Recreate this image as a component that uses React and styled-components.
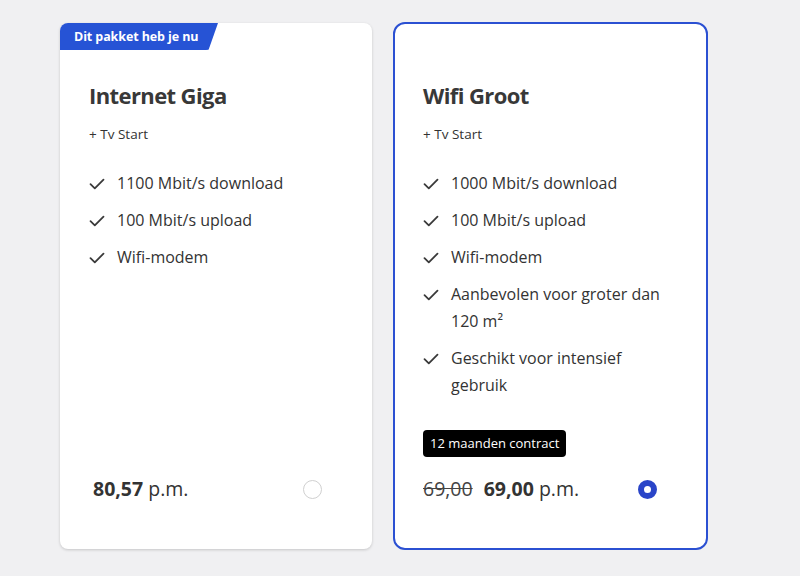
import React from 'react';
import styled, { createGlobalStyle } from 'styled-components';

const GlobalStyle = createGlobalStyle`
    html, body {
        margin: 0;
        padding: 0;
        background: #f0f0f2;
        font-family: "Open Sans", "Liberation Sans", sans-serif;
        color: #333;
    }
`;

const plans = [
    {
        name: 'Internet Giga',
        extra: '+ Tv Start',
        features: ['1100 Mbit/s download', '100 Mbit/s upload', 'Wifi-modem'],
        price: '80,57',
        current: true,
    },
    {
        name: 'Wifi Groot',
        extra: '+ Tv Start',
        features: [
            '1000 Mbit/s download',
            '100 Mbit/s upload',
            'Wifi-modem',
            'Aanbevolen voor groter dan 120 m²',
            'Geschikt voor intensief gebruik',
        ],
        oldPrice: '69,00',
        price: '69,00',
        contract: '12 maanden contract',
        selected: true,
    },
];

const Check = () => (
    <svg width="16" height="12" viewBox="0 0 16 12" fill="none">
        <path d="M1.5 6.2 L5.8 10.4 L14.5 1.6" stroke="#3a3a3a" strokeWidth="1.8" strokeLinecap="round" strokeLinejoin="round" />
    </svg>
);

const App = () => {
    return (
        <>
            <GlobalStyle />
            <Page>
                {plans.map((plan) => (
                    <Card key={plan.name} selected={plan.selected}>
                        {plan.current && <CurrentBadge>Dit pakket heb je nu</CurrentBadge>}
                        <Title>{plan.name}</Title>
                        <Extra>{plan.extra}</Extra>
                        <Features>
                            {plan.features.map((f) => (
                                <Feature key={f}>
                                    <IconWrap><Check /></IconWrap>
                                    <span>{f}</span>
                                </Feature>
                            ))}
                        </Features>
                        <Footer>
                            {plan.contract && <Contract>{plan.contract}</Contract>}
                            <PriceRow>
                                <Price indent={!plan.oldPrice}>
                                    {plan.oldPrice && <OldPrice>{plan.oldPrice}</OldPrice>}
                                    <strong>{plan.price}</strong> p.m.
                                </Price>
                                <Radio checked={plan.selected} />
                            </PriceRow>
                        </Footer>
                    </Card>
                ))}
            </Page>
        </>
    );
};

const Page = styled.div`
    display: flex;
    align-items: flex-start;
    gap: 21px;
    padding: 22px 0 0 60px;
    height: 576px;
    box-sizing: border-box;
`;

const Card = styled.div`
    position: relative;
    box-sizing: border-box;
    display: flex;
    flex-direction: column;
    background: #fff;
    width: ${(p) => (p.selected ? '315px' : '312px')};
    height: ${(p) => (p.selected ? '528px' : '526px')};
    margin-top: ${(p) => (p.selected ? '0' : '1px')};
    border-radius: ${(p) => (p.selected ? '12px' : '8px')};
    border: ${(p) => (p.selected ? '2px solid #2b50d2' : 'none')};
    box-shadow: ${(p) => (p.selected ? 'none' : '0 1px 3px rgba(0,0,0,0.18)')};
    padding: ${(p) => (p.selected ? '56px 28px 46px 28px' : '57px 29px 47px 29px')};
`;

const CurrentBadge = styled.div`
    position: absolute;
    top: 0;
    left: 0;
    height: 27px;
    width: 158px;
    box-sizing: border-box;
    padding-left: 14px;
    display: flex;
    align-items: center;
    background: #2653d5;
    color: #fff;
    font-size: 12.5px;
    font-weight: 700;
    letter-spacing: -0.1px;
    border-radius: 8px 0 12px 0;
    clip-path: polygon(0 0, 100% 0, 94% 100%, 0 100%);
`;

const Title = styled.h2`
    margin: 0;
    font-size: 22px;
    line-height: 30px;
    font-weight: 700;
    color: #383838;
    letter-spacing: -0.6px;
`;

const Extra = styled.div`
    margin-top: 14px;
    font-size: 13.5px;
    line-height: 20px;
    color: #333;
`;

const Features = styled.ul`
    list-style: none;
    margin: 26px 0 0 0;
    padding: 0;
    display: flex;
    flex-direction: column;
    gap: 10px;
`;

const Feature = styled.li`
    display: flex;
    align-items: flex-start;
    font-size: 16px;
    line-height: 27px;
    color: #333;
`;

const IconWrap = styled.span`
    flex: 0 0 28px;
    display: flex;
    align-items: center;
    height: 27px;
`;

const Footer = styled.div`
    margin-top: auto;
    display: flex;
    flex-direction: column;
    align-items: flex-start;
`;

const Contract = styled.div`
    background: #000;
    color: #fff;
    font-size: 13px;
    line-height: 27px;
    padding: 0 7px;
    border-radius: 4px;
    margin-bottom: 19px;
`;

const PriceRow = styled.div`
    align-self: stretch;
    display: flex;
    align-items: center;
    justify-content: space-between;
    padding-right: 21px;
`;

const Price = styled.div`
    font-size: 19.5px;
    line-height: 26px;
    color: #333;
    padding-left: ${(p) => (p.indent ? '4px' : '0')};
    strong {
        font-weight: 700;
    }
`;

const OldPrice = styled.span`
    text-decoration: line-through;
    font-weight: 400;
    margin-right: 11px;
    color: #444;
`;

const Radio = styled.span`
    box-sizing: border-box;
    width: 19px;
    height: 19px;
    border-radius: 50%;
    border: ${(p) => (p.checked ? '6px solid #2a45c8' : '1px solid #d0d0d0')};
    background: #fff;
`;

export default App;
